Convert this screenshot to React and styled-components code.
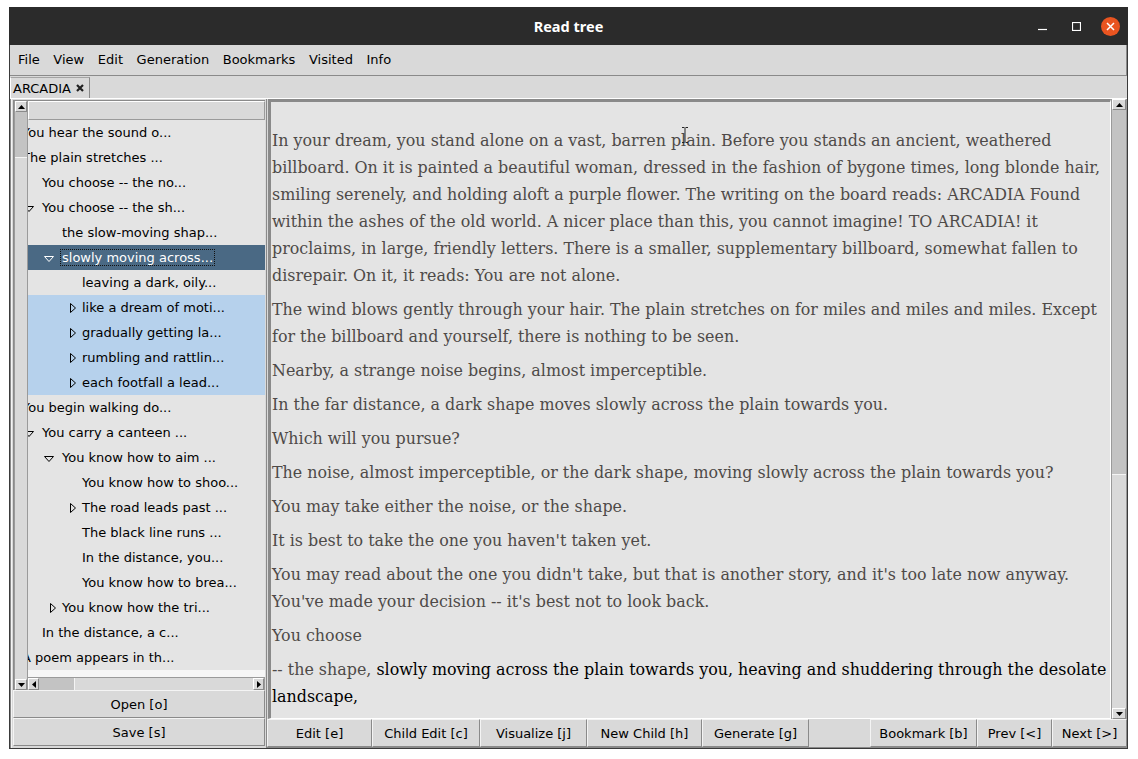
import styled, { createGlobalStyle } from "styled-components";

const GlobalStyle = createGlobalStyle`
  html, body {
    margin: 0;
    background: #ffffff;
  }
  body {
    font-family: "DejaVu Sans", sans-serif;
  }
`;

const UI_FONT = `"DejaVu Sans", "Liberation Sans", sans-serif`;

const Window = styled.div`
  margin: 7px 0 0 9px;
  width: 1119px;
  height: 742px;
  box-sizing: border-box;
  display: flex;
  flex-direction: column;
  background: #d9d9d9;
  border: 1px solid #3a3a3a;
  border-top: none;
  font-family: ${UI_FONT};
  font-size: 13px;
  color: #000;
`;

const TitleBar = styled.div`
  height: 38px;
  margin: 0 -1px;
  background: #2b2b2b;
  display: grid;
  grid-template-columns: 1fr auto 1fr;
  align-items: center;
`;

const Title = styled.div`
  grid-column: 2;
  color: #ffffff;
  font-family: "Noto Sans", sans-serif;
  font-weight: 700;
  font-size: 14.5px;
  padding-bottom: 1px;
`;

const Controls = styled.div`
  grid-column: 3;
  justify-self: end;
  display: flex;
  align-items: center;
  padding-right: 1px;
`;

const CtlSlot = styled.div`
  width: 34px;
  height: 26px;
  display: flex;
  align-items: center;
  justify-content: center;
`;

const CloseDot = styled.div`
  width: 19px;
  height: 19px;
  border-radius: 50%;
  background: #e95420;
  display: flex;
  align-items: center;
  justify-content: center;
`;

const MenuBar = styled.div`
  height: 30px;
  display: flex;
  align-items: center;
  gap: 13.6px;
  padding-left: 8px;
  border-bottom: 1px solid #8a8a8a;
  border-right: 1px solid #8a8a8a;
`;

const MenuItem = styled.span`
  line-height: 16px;
`;

const TabStrip = styled.div`
  height: 22px;
  display: flex;
  align-items: flex-end;
`;

const Tab = styled.div`
  height: 20px;
  width: 76px;
  display: flex;
  align-items: center;
  gap: 5px;
  padding-left: 2px;
  border-top: 1px solid #a4a4a4;
  border-left: 1px solid #ffffff;
  border-right: 1px solid #8a8a8a;
`;

const Body = styled.div`
  flex: 1;
  display: flex;
  border-top: 1px solid #ffffff;
  min-height: 0;
`;

const LeftPane = styled.div`
  width: 255px;
  display: flex;
  flex-direction: column;
  border-left: 1px solid #8a8a8a;
  border-right: 1px solid #8a8a8a;
  box-shadow: inset 1px 0 0 #f4f4f4;
`;

const TreeBox = styled.div`
  flex: 1;
  display: grid;
  grid-template-columns: 14px 1fr;
  grid-template-rows: 1fr 13px;
  margin: 1px 1px 0 2px;
  border-top: 1px solid #8a8a8a;
  border-left: 1px solid #8a8a8a;
  min-height: 0;
`;

const VScroll = styled.div`
  grid-row: ${(p) => (p.$full ? "1 / 3" : "auto")};
  width: ${(p) => p.$w || 14}px;
  display: flex;
  flex-direction: column;
  background: #d9d9d9;
  border-left: 1px solid #9a9a9a;
  border-right: 1px solid #9a9a9a;
  box-sizing: border-box;
`;

const HScroll = styled.div`
  display: flex;
  background: #d9d9d9;
  border-top: 1px solid #9a9a9a;
  border-right: 1px solid #9a9a9a;
`;

const ArrowBtn = styled.div`
  flex: none;
  width: ${(p) => (p.$horiz ? "11px" : "auto")};
  height: ${(p) => (p.$horiz ? "auto" : "11px")};
  display: flex;
  align-items: center;
  justify-content: center;
  background: #d9d9d9;
  border: 1px solid;
  border-color: #ffffff #8a8a8a #8a8a8a #ffffff;
  box-sizing: border-box;
`;

const Thumb = styled.div`
  flex: none;
  ${(p) => (p.$horiz ? `width: ${p.$size}px;` : `height: ${p.$size}px;`)}
  background: #c3c3c3;
  border: 1px solid #c3c3c3;
  box-sizing: border-box;
`;

const Trough = styled.div`
  flex: 1;
  background: #d9d9d9;
  box-shadow: ${(p) => (p.$horiz ? "inset 1px 0 0 #f4f4f4" : "inset 0 1px 0 #f4f4f4")};
`;

const TreeArea = styled.div`
  display: flex;
  flex-direction: column;
  overflow: hidden;
  background: #f6f6f6;
  min-height: 0;
`;

const Heading = styled.div`
  flex: none;
  height: 19px;
  background: #d9d9d9;
  border: 1px solid;
  border-color: #ffffff #9a9a9a #9a9a9a #ffffff;
  box-sizing: border-box;
`;

const Rows = styled.div`
  margin-left: -7px;
`;

const Row = styled.div`
  height: 25px;
  display: flex;
  align-items: center;
  white-space: nowrap;
  padding-left: ${(p) => Math.max(0, p.$level - 1) * 20}px;
  background: ${(p) => (p.$selected ? "#4a6984" : p.$hl ? "#b6d1ec" : "#e4e4e4")};
  color: ${(p) => (p.$selected ? "#ffffff" : "#000000")};
`;

const Indicator = styled.div`
  flex: none;
  width: 20px;
  height: 25px;
  display: flex;
  align-items: center;
  padding-left: ${(p) => (p.$open ? 3 : 9)}px;
  padding-top: ${(p) => (p.$open ? 3 : 0)}px;
  box-sizing: border-box;
`;

const Label = styled.span`
  padding: 0 1px;
  margin-left: -1px;
  line-height: 15px;
  border: 1px dotted ${(p) => (p.$focus ? "#111" : "transparent")};
`;

const PaneButton = styled.div`
  height: 28px;
  margin: 0 1px 0 2px;
  display: flex;
  align-items: center;
  justify-content: center;
  border: 1px solid;
  border-color: #f4f4f4 #8a8a8a #8a8a8a #f4f4f4;
  box-sizing: border-box;
  &:last-child {
    margin-bottom: 2px;
  }
`;

const RightPane = styled.div`
  flex: 1;
  display: flex;
  flex-direction: column;
  min-width: 0;
`;

const TextRow = styled.div`
  flex: 1;
  display: flex;
  min-height: 0;
`;

const TextBox = styled.div`
  flex: 1;
  position: relative;
  overflow: hidden;
  background: #e4e4e4;
  margin-left: 1px;
  border-top: 3px solid #8a8a8a;
  border-left: 3px solid #8a8a8a;
  border-right: 1px solid #ffffff;
  border-bottom: 1px solid #ffffff;
  padding: 25px 0 0 1px;
  font-family: "DejaVu Serif", "Liberation Serif", serif;
  font-size: 15.9px;
  line-height: 27px;
  color: #4e4a48;
`;

const Para = styled.p`
  margin: 0 0 7px;
`;

const Strong = styled.span`
  color: #000000;
`;

const Cursor = styled.svg`
  position: absolute;
  left: 410px;
  top: 25px;
`;

const ButtonBar = styled.div`
  height: 28px;
  display: flex;
  border-bottom: 1px solid #8a8a8a;
`;

const BarButton = styled.div`
  width: ${(p) => p.$w}px;
  flex: none;
  display: flex;
  align-items: center;
  justify-content: center;
  border: 1px solid;
  border-color: #f4f4f4 #8a8a8a #8a8a8a #f4f4f4;
  box-sizing: border-box;
`;

const Spacer = styled.div`
  flex: 1;
`;

const UpArrow = () => (
  <svg width="7" height="4" viewBox="0 0 7 4">
    <polygon points="0,4 7,4 3.5,0" fill="#000" />
  </svg>
);
const DownArrow = () => (
  <svg width="7" height="4" viewBox="0 0 7 4">
    <polygon points="0,0 7,0 3.5,4" fill="#000" />
  </svg>
);
const LeftArrow = () => (
  <svg width="4" height="7" viewBox="0 0 4 7">
    <polygon points="4,0 4,7 0,3.5" fill="#000" />
  </svg>
);
const RightArrow = () => (
  <svg width="4" height="7" viewBox="0 0 4 7">
    <polygon points="0,0 0,7 4,3.5" fill="#000" />
  </svg>
);

const OpenMark = ({ color }) => (
  <svg width="10" height="6" viewBox="0 0 10 6">
    <polygon points="0.5,0.5 9.5,0.5 5,5.5" fill="none" stroke={color} strokeWidth="1" />
  </svg>
);
const ClosedMark = ({ color }) => (
  <svg width="6" height="10" viewBox="0 0 6 10">
    <polygon points="0.5,0.5 0.5,9.5 5.5,5" fill="none" stroke={color} strokeWidth="1" />
  </svg>
);

const rows = [
  { level: 0, text: "You hear the sound o..." },
  { level: 0, text: "The plain stretches ..." },
  { level: 1, text: "You choose -- the no..." },
  { level: 1, text: "You choose -- the sh...", mark: "open" },
  { level: 2, text: "the slow-moving shap..." },
  { level: 2, text: "slowly moving across...", mark: "open", selected: true },
  { level: 3, text: "leaving a dark, oily..." },
  { level: 3, text: "like a dream of moti...", mark: "closed", hl: true },
  { level: 3, text: "gradually getting la...", mark: "closed", hl: true },
  { level: 3, text: "rumbling and rattlin...", mark: "closed", hl: true },
  { level: 3, text: "each footfall a lead...", mark: "closed", hl: true },
  { level: 0, text: "You begin walking do..." },
  { level: 1, text: "You carry a canteen ...", mark: "open" },
  { level: 2, text: "You know how to aim ...", mark: "open" },
  { level: 3, text: "You know how to shoo..." },
  { level: 3, text: "The road leads past ...", mark: "closed" },
  { level: 3, text: "The black line runs ..." },
  { level: 3, text: "In the distance, you..." },
  { level: 3, text: "You know how to brea..." },
  { level: 2, text: "You know how the tri...", mark: "closed" },
  { level: 1, text: "In the distance, a c..." },
  { level: 0, text: "A poem appears in th..." },
];

const paragraphs = [
  "In your dream, you stand alone on a vast, barren plain. Before you stands an ancient, weathered billboard. On it is painted a beautiful woman, dressed in the fashion of bygone times, long blonde hair, smiling serenely, and holding aloft a purple flower. The writing on the board reads: ARCADIA Found within the ashes of the old world. A nicer place than this, you cannot imagine! TO ARCADIA! it proclaims, in large, friendly letters. There is a smaller, supplementary billboard, somewhat fallen to disrepair. On it, it reads: You are not alone.",
  "The wind blows gently through your hair. The plain stretches on for miles and miles and miles. Except for the billboard and yourself, there is nothing to be seen.",
  "Nearby, a strange noise begins, almost imperceptible.",
  "In the far distance, a dark shape moves slowly across the plain towards you.",
  "Which will you pursue?",
  "The noise, almost imperceptible, or the dark shape, moving slowly across the plain towards you?",
  "You may take either the noise, or the shape.",
  "It is best to take the one you haven't taken yet.",
  "You may read about the one you didn't take, but that is another story, and it's too late now anyway. You've made your decision -- it's best not to look back.",
  "You choose",
];

const buttons = [
  { label: "Edit [e]", w: 105 },
  { label: "Child Edit [c]", w: 108 },
  { label: "Visualize [j]", w: 107 },
  { label: "New Child [h]", w: 115 },
  { label: "Generate [g]", w: 107 },
];

const navButtons = [
  { label: "Bookmark [b]", w: 107 },
  { label: "Prev [<]", w: 75 },
  { label: "Next [>]", w: 75 },
];

export default function App() {
  return (
    <>
      <GlobalStyle />
      <Window>
        <TitleBar>
          <Title>Read tree</Title>
          <Controls>
            <CtlSlot>
              <svg width="9" height="9" viewBox="0 0 9 9">
                <line x1="0" y1="7.5" x2="9" y2="7.5" stroke="#fff" strokeWidth="1.2" />
              </svg>
            </CtlSlot>
            <CtlSlot>
              <svg width="9" height="9" viewBox="0 0 9 9">
                <rect x="0.5" y="0.5" width="8" height="8" fill="none" stroke="#fff" strokeWidth="1.2" />
              </svg>
            </CtlSlot>
            <CtlSlot>
              <CloseDot>
                <svg width="9" height="9" viewBox="0 0 9 9">
                  <path d="M1 1 L8 8 M8 1 L1 8" stroke="#fff" strokeWidth="1.5" />
                </svg>
              </CloseDot>
            </CtlSlot>
          </Controls>
        </TitleBar>

        <MenuBar>
          {["File", "View", "Edit", "Generation", "Bookmarks", "Visited", "Info"].map((m) => (
            <MenuItem key={m}>{m}</MenuItem>
          ))}
        </MenuBar>

        <TabStrip>
          <Tab>
            <span>ARCADIA</span>
            <svg width="8" height="8" viewBox="0 0 8 8">
              <path d="M1 1 L7 7 M7 1 L1 7" stroke="#222" strokeWidth="2.2" />
            </svg>
          </Tab>
        </TabStrip>

        <Body>
          <LeftPane>
            <TreeBox>
              <VScroll $full>
                <ArrowBtn>
                  <UpArrow />
                </ArrowBtn>
                <Thumb $size={45} />
                <Trough />
                <ArrowBtn>
                  <DownArrow />
                </ArrowBtn>
              </VScroll>
              <TreeArea>
                <Heading />
                <Rows>
                  {rows.map((r, i) => (
                    <Row key={i} $level={r.level} $selected={r.selected} $hl={r.hl}>
                      {r.level > 0 && (
                        <Indicator $open={r.mark === "open"}>
                          {r.mark === "open" && <OpenMark color={r.selected ? "#fff" : "#000"} />}
                          {r.mark === "closed" && <ClosedMark color="#000" />}
                        </Indicator>
                      )}
                      <Label $focus={r.selected}>{r.text}</Label>
                    </Row>
                  ))}
                </Rows>
              </TreeArea>
              <HScroll>
                <ArrowBtn $horiz>
                  <LeftArrow />
                </ArrowBtn>
                <Thumb $horiz $size={35} />
                <Trough $horiz />
                <ArrowBtn $horiz>
                  <RightArrow />
                </ArrowBtn>
              </HScroll>
            </TreeBox>
            <PaneButton>Open [o]</PaneButton>
            <PaneButton>Save [s]</PaneButton>
          </LeftPane>

          <RightPane>
            <TextRow>
              <TextBox>
                {paragraphs.map((p, i) => (
                  <Para key={i}>{p}</Para>
                ))}
                <Para>
                  -- the shape,{" "}
                  <Strong>
                    slowly moving across the plain towards you, heaving and shuddering through the desolate landscape,
                  </Strong>
                </Para>
                <Cursor width="8" height="16" viewBox="0 0 8 16">
                  <path d="M1 0.5 H3.5 M4.5 0.5 H7 M4 1 V15 M1 15.5 H3.5 M4.5 15.5 H7" stroke="#222" strokeWidth="1" fill="none" />
                </Cursor>
              </TextBox>
              <VScroll $w={16}>
                <ArrowBtn>
                  <UpArrow />
                </ArrowBtn>
                <Thumb $size={364} />
                <Trough />
                <ArrowBtn>
                  <DownArrow />
                </ArrowBtn>
              </VScroll>
            </TextRow>
            <ButtonBar>
              {buttons.map((b) => (
                <BarButton key={b.label} $w={b.w}>
                  {b.label}
                </BarButton>
              ))}
              <Spacer />
              {navButtons.map((b) => (
                <BarButton key={b.label} $w={b.w}>
                  {b.label}
                </BarButton>
              ))}
            </ButtonBar>
          </RightPane>
        </Body>
      </Window>
    </>
  );
}
